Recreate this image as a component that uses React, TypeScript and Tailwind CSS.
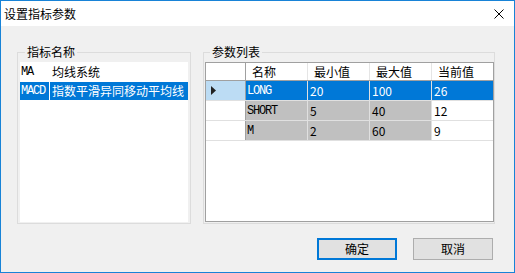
import React from 'react';

const params = [
  { name: 'LONG', min: '20', max: '100', cur: '26' },
  { name: 'SHORT', min: '5', max: '40', cur: '12' },
  { name: 'M', min: '2', max: '60', cur: '9' },
];

const mono = "font-['Liberation_Mono','Noto_Sans_CJK_SC',monospace] text-[12px] tracking-[-1.2px]";

export default function App() {
  return (
    <div className="w-[515px] h-[273px] border border-[#1883d7] bg-[#f0f0f0] flex flex-col font-['Noto_Sans_CJK_SC',sans-serif] text-[12px] text-black">
      {/* title bar */}
      <div className="h-[25px] shrink-0 bg-white flex items-center justify-between pl-[3px] pr-[10px]">
        <span className="leading-[16px]">设置指标参数</span>
        <svg width="10" height="10" viewBox="0 0 10 10">
          <path d="M0.5 0.5L9.5 9.5M9.5 0.5L0.5 9.5" stroke="#000" strokeWidth="1" fill="none" />
        </svg>
      </div>

      <div className="flex-1 flex flex-col pt-[18px] pl-[16px] pr-[19px]">
        <div className="flex gap-[12px]">
          {/* indicator list */}
          <fieldset className="w-[174px] border border-[#dcdcdc] px-[2px] pt-[2px] pb-[1px]">
            <legend className="ml-[5px] px-[2px] leading-[16px]">指标名称</legend>
            <div className="h-[160px] bg-white">
              <div className="flex h-[20px] items-center">
                <div className={`w-[29px] pl-[1px] ${mono}`}>MA</div>
                <div className="w-[1px]" />
                <div className="flex-1 pl-[2px] leading-[16px]">均线系统</div>
              </div>
              <div className="flex h-[18px] text-white">
                <div className={`w-[29px] pl-[1px] bg-[#0078d7] flex items-center ${mono}`}>MACD</div>
                <div className="w-[1px] bg-white" />
                <div className="flex-1 pl-[2px] bg-[#0078d7] flex items-center leading-[16px]">指数平滑异同移动平均线</div>
              </div>
            </div>
          </fieldset>

          {/* parameter grid */}
          <fieldset className="w-[292px] border border-[#dcdcdc] pl-[1px] pt-[2px] pb-[1px]">
            <legend className="ml-[5px] px-[2px] leading-[16px]">参数列表</legend>
            <div className="w-[289px] h-[160px] bg-white border border-[#a0a0a0]">
              <div className="flex h-[18px] border-b border-[#a0a0a0]">
                <div className="w-[40px] border-r border-[#a0a0a0]" />
                {['名称', '最小值', '最大值', '当前值'].map((h, i) => (
                  <div
                    key={h}
                    className={`pl-[6px] flex items-center leading-[16px] ${i < 3 ? 'w-[62px] border-r border-[#e5e5e5]' : 'w-[61px]'}`}
                  >
                    {h}
                  </div>
                ))}
              </div>
              {params.map((p, r) => {
                const sel = r === 0;
                const ro = sel ? 'bg-[#0078d7] text-white' : 'bg-[#c0c0c0]';
                return (
                  <div key={p.name} className="flex h-[20px] border-b border-[#e0e0e0]">
                    <div className={`w-[40px] border-r border-[#a0a0a0] flex items-center pl-[5px] ${sel ? 'bg-[#bcdcf4]' : ''}`}>
                      {sel && (
                        <svg width="6" height="9" viewBox="0 0 6 9">
                          <polygon points="0,0 5,4.5 0,9" fill="#222" />
                        </svg>
                      )}
                    </div>
                    <div className={`w-[62px] border-r border-[#e0e0e0] pl-[1px] flex items-center ${mono} ${ro}`}>{p.name}</div>
                    <div className={`w-[62px] border-r border-[#e0e0e0] pl-[2px] flex items-center ${ro}`}>{p.min}</div>
                    <div className={`w-[62px] border-r border-[#e0e0e0] pl-[2px] flex items-center ${ro}`}>{p.max}</div>
                    <div className={`w-[61px] pl-[2px] flex items-center ${sel ? 'bg-[#0078d7] text-white' : ''}`}>{p.cur}</div>
                  </div>
                );
              })}
            </div>
          </fieldset>
        </div>

        {/* buttons */}
        <div className="mt-[14px] flex justify-end gap-[16px] pr-[2px]">
          <button className="w-[80px] h-[22px] border-2 border-[#0078d7] bg-[#e1e1e1] leading-[16px]">确定</button>
          <button className="w-[80px] h-[22px] border border-[#adadad] bg-[#e1e1e1] leading-[16px]">取消</button>
        </div>
      </div>
    </div>
  );
}
